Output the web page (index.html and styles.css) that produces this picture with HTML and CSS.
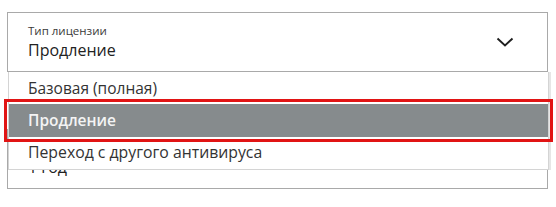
FILE: index.html
```html
<!DOCTYPE html>
<html lang="ru">

<head>
  <meta charset="UTF-8">
  <meta name="viewport" content="width=device-width, initial-scale=1.0">
  <title>Тип лицензии</title>
  <link rel="stylesheet" href="styles.css">
</head>

<body>
  <div class="form">
    <div class="field">
      <div class="select">
        <div class="selectText">
          <span class="label">Тип лицензии</span>
          <span class="value">Продление</span>
        </div>
        <svg class="chevron" width="18" height="10" viewBox="0 0 18 10">
          <path d="M1.5 1.5 L9 8.5 L16.5 1.5" fill="none" stroke="#1f1f1f" stroke-width="1.9" />
        </svg>
      </div>
      <ul class="options">
        <li>Базовая (полная)</li>
        <li class="selected">Продление</li>
        <li class="last">Переход с другого антивируса</li>
      </ul>
    </div>

    <div class="field second">
      <div class="select">
        <div class="selectText">
          <span class="label">Срок лицензии</span>
          <span class="value">1 год</span>
        </div>
      </div>
    </div>
  </div>
</body>

</html>
```

FILE: styles.css
```css
* {
  margin: 0;
  padding: 0;
  box-sizing: border-box;
}
body {
  background: #fff;
  font-family: "Open Sans", "Noto Sans", sans-serif;
  color: #222;
}
.form {
  padding: 12px 8px 0 7px;
}
.field {
  position: relative;
}
.second {
  margin-top: 57px;
}
.select {
  height: 60px;
  border: 1px solid #a9a9a9;
  background: #fff;
  display: flex;
  align-items: center;
  padding: 0 33px 0 20px;
}
.selectText {
  flex: 1;
  display: flex;
  flex-direction: column;
  padding-bottom: 1px;
}
.label {
  font-size: 11.5px;
  line-height: 16px;
  color: #3a3a3a;
}
.value {
  font-size: 16px;
  line-height: 22px;
  color: #222;
}
.chevron {
  display: block;
}
.options {
  list-style: none;
  position: absolute;
  top: 100%;
  left: 1px;
  right: -1px;
  z-index: 2;
  background: #fff;
  border: 1px solid #d4d4d4;
  border-top: none;
  box-shadow: 2px 0 0 #e6e6e6;
}
.options li {
  height: 32px;
  padding-left: 19px;
  font-size: 15.5px;
  line-height: 32px;
  color: #333;
}
.options .last {
  font-size: 15.8px;
  line-height: 30px;
}
.options .selected {
  height: 33px;
  line-height: 33px;
  background: #868b8d;
  color: #f4f4f4;
  font-weight: 600;
  outline: 3px solid #e11414;
  outline-offset: 2px;
}
```
